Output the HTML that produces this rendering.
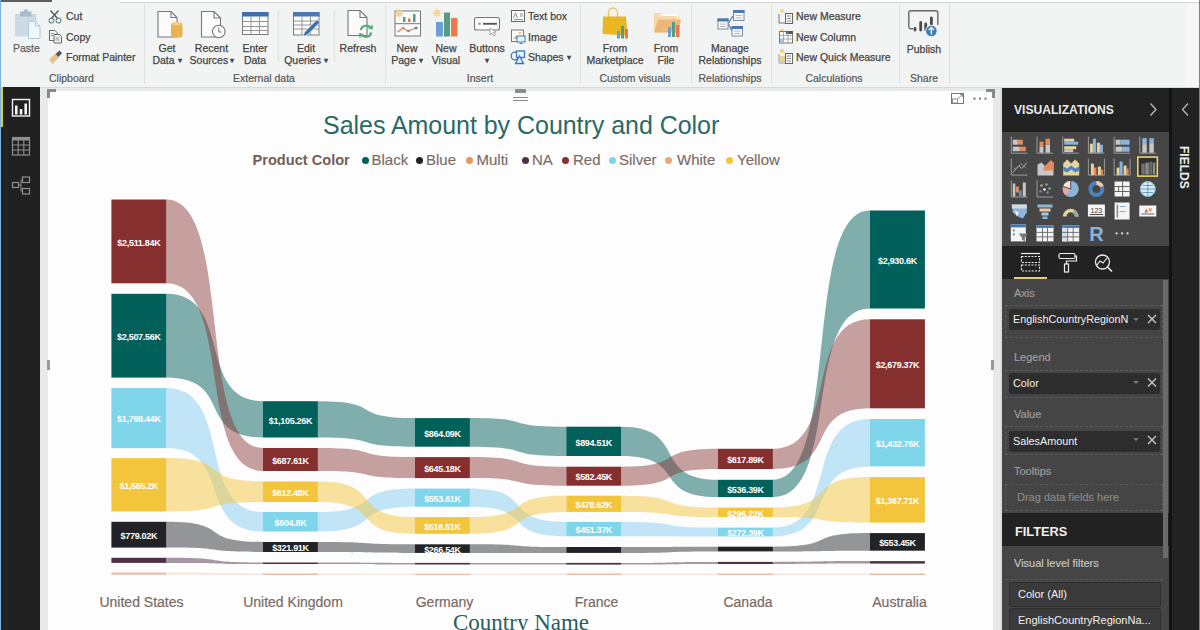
<!DOCTYPE html>
<html><head><meta charset="utf-8">
<style>
*{box-sizing:border-box}
html,body{margin:0;padding:0;width:1200px;height:630px;overflow:hidden;background:#f2f4f3;font-family:"Liberation Sans",sans-serif}
.a{position:absolute}
.rb{color:#444;font-size:10.5px;line-height:12px;white-space:nowrap;-webkit-text-stroke:0.25px #444}
.gl{color:#555;font-size:10.5px;line-height:12px;white-space:nowrap;-webkit-text-stroke:0.2px #555}
.dl{font-family:"Liberation Sans",sans-serif;font-weight:bold;font-size:9px;fill:#fff;letter-spacing:-0.3px}
.xl{color:#7b6b66;font-size:14px;line-height:16px;white-space:nowrap;-webkit-text-stroke:0.2px #7b6b66}
.lg{color:#7b6b66;font-size:15px;line-height:18px;white-space:nowrap;-webkit-text-stroke:0.15px #7b6b66}
.c{text-align:center}
.car{font-size:8px;position:relative;top:-1px}
.pl{color:#a0a0a0;font-size:11px;line-height:14px;white-space:nowrap;-webkit-text-stroke:0.15px}
.well{width:158px;border:1px dashed #5a5a5a}
.box{width:151px;height:20.5px;background:#2d2d2d;color:#f0f0f0;font-size:10.8px;line-height:20px;padding-left:4px;white-space:nowrap;border-radius:2px}
.fbox{width:152px;background:#3a3a3a;color:#f0f0f0;font-size:11px;line-height:22px;padding-left:8px;white-space:nowrap;border:1px solid #2f2f2f;border-radius:2px}
.dot{width:7px;height:7px;border-radius:50%}
</style></head><body>
<!-- ribbon -->
<div class="a" style="left:0;top:0;width:1200px;height:88px;background:#f2f4f3;border-bottom:1px solid #d9d9d9"></div>
<div class="a" style="left:0;top:0;width:52px;height:2px;background:#5e5e5e"></div>
<div class="a" style="left:120px;top:0;width:1080px;height:3px;background:#fff;border-bottom:1px solid #d6d6d6"></div>
<div class="a" style="left:0;top:0;width:1px;height:630px;background:#78b6de"></div>
<div class="a" style="left:1186px;top:4px;width:13px;height:83px;background:#f6f6f6"></div>
<div class="a" style="left:1199px;top:0;width:1px;height:630px;background:#4a90c8"></div>
<!-- ribbon texts -->
<div class="a rb" style="left:13px;top:42px;color:#7a7a7a">Paste</div>
<div class="a rb" style="left:66px;top:10px">Cut</div>
<div class="a rb" style="left:66px;top:31px">Copy</div>
<div class="a rb" style="left:66px;top:51px">Format Painter</div>
<div class="a gl" style="left:49px;top:72px">Clipboard</div>
<div class="a" style="left:144px;top:4px;width:1px;height:80px;background:#e0e0e0"></div>

<div class="a rb c" style="left:147px;width:40px;top:42px">Get</div>
<div class="a rb c" style="left:147px;width:40px;top:54px">Data <span class="car">&#9662;</span></div>
<div class="a rb c" style="left:186.5px;width:50px;top:42px">Recent</div>
<div class="a rb c" style="left:187px;width:50px;top:54px">Sources<span class="car"> &#9662;</span></div>
<div class="a rb c" style="left:235px;width:40px;top:42px">Enter</div>
<div class="a rb c" style="left:235px;width:40px;top:54px">Data</div>
<div class="a" style="left:278px;top:10px;width:1px;height:52px;background:#e0e0e0"></div>
<div class="a rb c" style="left:282px;width:48px;top:42px">Edit</div>
<div class="a rb c" style="left:282px;width:48px;top:54px">Queries <span class="car">&#9662;</span></div>
<div class="a" style="left:334px;top:10px;width:1px;height:52px;background:#e0e0e0"></div>
<div class="a rb c" style="left:337px;width:42px;top:42px">Refresh</div>
<div class="a gl c" style="left:214px;width:100px;top:72px">External data</div>
<div class="a" style="left:385px;top:4px;width:1px;height:80px;background:#e0e0e0"></div>

<div class="a rb c" style="left:390px;width:34px;top:42px">New</div>
<div class="a rb c" style="left:388px;width:38px;top:54px">Page <span class="car">&#9662;</span></div>
<div class="a rb c" style="left:428px;width:36px;top:42px">New</div>
<div class="a rb c" style="left:428px;width:36px;top:54px">Visual</div>
<div class="a rb c" style="left:465px;width:44px;top:42px">Buttons</div>
<div class="a rb c" style="left:465px;width:44px;top:54px"><span class="car">&#9662;</span></div>
<div class="a rb" style="left:528px;top:10px">Text box</div>
<div class="a rb" style="left:528px;top:31px">Image</div>
<div class="a rb" style="left:528px;top:51px">Shapes <span class="car">&#9662;</span></div>
<div class="a gl c" style="left:440px;width:80px;top:72px">Insert</div>
<div class="a" style="left:580px;top:4px;width:1px;height:80px;background:#e0e0e0"></div>

<div class="a rb c" style="left:585px;width:60px;top:42px">From</div>
<div class="a rb c" style="left:585px;width:60px;top:54px">Marketplace</div>
<div class="a rb c" style="left:646px;width:40px;top:42px">From</div>
<div class="a rb c" style="left:646px;width:40px;top:54px">File</div>
<div class="a gl c" style="left:585px;width:100px;top:72px">Custom visuals</div>
<div class="a" style="left:691px;top:4px;width:1px;height:80px;background:#e0e0e0"></div>

<div class="a rb c" style="left:693px;width:74px;top:42px">Manage</div>
<div class="a rb c" style="left:693px;width:74px;top:54px">Relationships</div>
<div class="a gl c" style="left:693px;width:74px;top:72px">Relationships</div>
<div class="a" style="left:771px;top:4px;width:1px;height:80px;background:#e0e0e0"></div>

<div class="a rb" style="left:796px;top:10px">New Measure</div>
<div class="a rb" style="left:796px;top:31px">New Column</div>
<div class="a rb" style="left:796px;top:51px">New Quick Measure</div>
<div class="a gl c" style="left:784px;width:100px;top:72px">Calculations</div>
<div class="a" style="left:899px;top:4px;width:1px;height:80px;background:#e0e0e0"></div>

<div class="a rb c" style="left:900px;width:48px;top:43px">Publish</div>
<div class="a gl c" style="left:900px;width:48px;top:72px">Share</div>
<div class="a" style="left:949px;top:4px;width:1px;height:80px;background:#e0e0e0"></div>

<svg class="a" style="left:0;top:0" width="1000" height="88" viewBox="0 0 1000 88">
<!-- Paste -->
<rect x="15" y="14" width="21.5" height="22.5" fill="#cbdbe6"/>
<rect x="20" y="11.5" width="11.5" height="5" fill="#a9bccb"/>
<circle cx="25.8" cy="11.5" r="2.3" fill="#a9bccb"/>
<path d="M28.5,21.5 H35.5 L40,26 V38.5 H28.5 Z" fill="#eef7fb" stroke="#b5c8d5" stroke-width="1"/>
<path d="M35.5,21.5 V26 H40" fill="none" stroke="#b5c8d5" stroke-width="1"/>
<!-- Cut -->
<path d="M50.5,10.5 L58,19 M58.5,10.5 L51,19" stroke="#555" stroke-width="1.3" fill="none"/>
<circle cx="51.5" cy="20.5" r="2.4" fill="none" stroke="#6a8a8a" stroke-width="1.1"/>
<circle cx="58.5" cy="20.5" r="2.4" fill="none" stroke="#6a8a8a" stroke-width="1.1"/>
<!-- Copy -->
<path d="M49.5,30.5 H55 L57,32.5 V40.5 H49.5 Z" fill="#f6f6f6" stroke="#666" stroke-width="1"/>
<path d="M54,34.5 H59.5 L61.5,36.5 V43 H54 Z" fill="#f6f6f6" stroke="#666" stroke-width="1"/>
<path d="M51,33.5 H54 M51,35.5 H53 M55.5,38 H59.5 M55.5,40 H59.5" stroke="#777" stroke-width="0.8"/>
<!-- Format painter -->
<path d="M49,60 L55,53.5 L59,57.5 L52.5,64 Z" fill="#e2c48a"/>
<path d="M55.5,54 L59.5,50.5 L62,53 L58.5,57" fill="#555"/>
<!-- Get Data -->
<path d="M158,11.5 H171 L177,17.5 V37 H158 Z" fill="#fbfbfb" stroke="#777" stroke-width="1.1"/>
<path d="M171,11.5 V17.5 H177" fill="none" stroke="#777" stroke-width="1.1"/>
<rect x="171" y="23" width="11.5" height="14.5" rx="2" fill="#e9b253"/>
<ellipse cx="176.75" cy="23.5" rx="5.75" ry="1.8" fill="#f3cf8a"/>
<!-- Recent Sources -->
<path d="M201.5,11.5 H214 L220.5,18 V37 H201.5 Z" fill="#fbfbfb" stroke="#777" stroke-width="1.1"/>
<path d="M214,11.5 V18 H220.5" fill="none" stroke="#777" stroke-width="1.1"/>
<circle cx="218.8" cy="31.5" r="6.3" fill="#fbfbfb" stroke="#777" stroke-width="1.1"/>
<path d="M218.8,27.5 V32 H221.5" fill="none" stroke="#777" stroke-width="1"/>
<!-- Enter Data -->
<rect x="242.5" y="12.5" width="25.5" height="22" fill="#fbfbfb" stroke="#7a7a7a" stroke-width="1"/>
<rect x="242" y="12" width="26.5" height="4.5" fill="#3f70ad"/>
<path d="M251,16.5 V34.5 M259.5,16.5 V34.5 M242.5,21.5 H268 M242.5,26.5 H268 M242.5,30.5 H268" stroke="#8a8a8a" stroke-width="0.9"/>
<!-- Edit Queries -->
<rect x="293.5" y="12.5" width="25.5" height="22.5" fill="#fbfbfb" stroke="#7a7a7a" stroke-width="1"/>
<rect x="293" y="12" width="26.5" height="4.5" fill="#4a7ab2"/>
<path d="M302,16.5 V35 M310.5,16.5 V35 M293.5,21 H319 M293.5,25 H319 M293.5,29 H319" stroke="#8a8a8a" stroke-width="0.9"/>
<path d="M303,36.5 L304.5,32 L317,19.5 L320,22.5 L307.5,35 Z" fill="#3d6fa8" stroke="#fbfbfb" stroke-width="0.8"/>
<!-- Refresh -->
<path d="M348,10.5 H360 L367,17.5 V35.5 H348 Z" fill="#fbfbfb" stroke="#777" stroke-width="1.1"/>
<path d="M360,10.5 V17.5 H367" fill="none" stroke="#777" stroke-width="1.1"/>
<path d="M360.8,30 A5.4,5.4 0 0 1 370.6,28" fill="none" stroke="#5aa87c" stroke-width="2.2"/>
<path d="M371.2,32.5 A5.4,5.4 0 0 1 361.4,34.5" fill="none" stroke="#5aa87c" stroke-width="2.2"/>
<path d="M368,28.5 L373,29.5 L372.5,24.5 Z M364,34 L359,33 L359.5,38 Z" fill="#5aa87c"/>
<!-- New Page -->
<rect x="395" y="11" width="25.5" height="25" fill="#fbfbfb" stroke="#777" stroke-width="1"/>
<path d="M395,23.7 H420.5" stroke="#777" stroke-width="1"/>
<rect x="403" y="17" width="2.5" height="5" fill="#5a9a86"/><rect x="408" y="18.5" width="2.5" height="3.5" fill="#e8784a"/><rect x="413" y="14" width="2.5" height="8" fill="#5a9a86"/>
<path d="M397.5,32 L403,28 L408,31 L414,28.5 L418,28" fill="none" stroke="#e8784a" stroke-width="1.2"/>
<circle cx="403" cy="28" r="1.3" fill="#e8784a"/><circle cx="408.5" cy="31" r="1.3" fill="#5a9a86"/><circle cx="416" cy="28" r="1.6" fill="#5a9a86"/>
<circle cx="399" cy="13.5" r="3.3" fill="#f3dca0"/>
<path d="M399,8.5 V18.5 M394,13.5 H404 M395.5,10 L402.5,17 M402.5,10 L395.5,17" stroke="#f0d090" stroke-width="0.8"/>
<!-- New Visual -->
<circle cx="437" cy="13" r="3" fill="#f3dca0"/>
<path d="M437,8 V18 M432,13 H442 M433.5,9.5 L440.5,16.5 M440.5,9.5 L433.5,16.5" stroke="#f0d090" stroke-width="0.8"/>
<rect x="436" y="22" width="7" height="14.5" fill="#6c9fd2"/>
<rect x="444" y="12.5" width="6" height="24" fill="#5b9a82"/>
<rect x="451" y="18" width="6.5" height="18.5" fill="#ec7c46"/>
<!-- Buttons -->
<rect x="474.5" y="17.5" width="25" height="12.5" rx="2" fill="#fbfbfb" stroke="#777" stroke-width="1.1"/>
<circle cx="479.5" cy="23.8" r="1.2" fill="#7a9ab8"/>
<path d="M483,23.8 H497" stroke="#555" stroke-width="1.8"/>
<path d="M490,28 L490,35 L492,33 L494,36 L495.5,35 L493.5,32.5 L496,32 Z" fill="#fbfbfb" stroke="#888" stroke-width="0.7"/>
<!-- Text box -->
<rect x="511.5" y="10.5" width="13" height="11" fill="#fbfbfb" stroke="#666" stroke-width="1"/>
<path d="M513.5,18 L515.5,13 L517.5,18 M520,14 H523 M520,16 H523 M514,19.5 H523" stroke="#777" stroke-width="0.8" fill="none"/>
<!-- Image -->
<rect x="511.5" y="30" width="12" height="11.5" fill="#fbfbfb" stroke="#777" stroke-width="1"/>
<path d="M513,39 L516,35.5 L519,39 Z" fill="#a8c8a0"/><circle cx="520" cy="33" r="1.2" fill="#f0c050"/>
<rect x="517" y="36" width="8" height="6" fill="#eaf4fb" stroke="#3a78b8" stroke-width="1"/>
<path d="M519.5,43.5 H522.5" stroke="#3a78b8" stroke-width="1"/>
<!-- Shapes -->
<circle cx="515" cy="56" r="3.8" fill="none" stroke="#3a78b8" stroke-width="1.3"/>
<rect x="516.5" y="51" width="8" height="6.5" fill="#eaf4fb" stroke="#3a78b8" stroke-width="1.3"/>
<path d="M519.5,56 L515.5,63.5 H523.5 Z" fill="#eaf4fb" stroke="#3a78b8" stroke-width="1.3"/>
<!-- From Marketplace -->
<path d="M608.5,17 V12.5 A4.5,4.5 0 0 1 617.5,12.5 V17" fill="none" stroke="#e8c860" stroke-width="1.3"/>
<path d="M603,16.5 H626 L627.5,35.5 L602.5,34 Z" fill="#e8b722"/>
<rect x="617" y="31" width="3" height="7.5" fill="#6c9fd2"/><rect x="621" y="26" width="3" height="12.5" fill="#5b9a82"/><rect x="625" y="29" width="3" height="9.5" fill="#e8784a"/>
<!-- From File -->
<path d="M654,13 H662 L664,16 H679.5 V32.5 H654 Z" fill="#f7d9a8"/>
<path d="M654,32.5 L658,19.5 H681 L678,32.5 Z" fill="#eeb77a"/>
<path d="M660,16.5 V15 H677 V19" fill="none" stroke="#fff" stroke-width="1"/>
<rect x="668" y="27" width="3" height="10" fill="#6c9fd2"/><rect x="672" y="22" width="3" height="15" fill="#5b9a82"/><rect x="676" y="25" width="3.5" height="12" fill="#e8784a"/>
<!-- Manage Relationships -->
<path d="M728,23.5 L733,16 M728,23.5 L732,31" stroke="#4a78b0" stroke-width="1.2" fill="none"/>
<rect x="718" y="19" width="10" height="10" fill="#fbfbfb" stroke="#7a8aa0" stroke-width="1"/><rect x="717.5" y="18.5" width="11" height="3" fill="#4a78b0"/>
<path d="M720,24 H726 M720,26.5 H726" stroke="#999" stroke-width="0.7"/>
<rect x="733.5" y="10.5" width="10.5" height="10" fill="#fbfbfb" stroke="#7a8aa0" stroke-width="1"/><rect x="733" y="10" width="11.5" height="3" fill="#4a78b0"/>
<path d="M735.5,15.5 H742 M735.5,18 H742" stroke="#999" stroke-width="0.7"/>
<rect x="732" y="26.5" width="10.5" height="9.5" fill="#fbfbfb" stroke="#7a8aa0" stroke-width="1"/><rect x="731.5" y="26" width="11.5" height="3" fill="#4a78b0"/>
<path d="M734,31 H740.5 M734,33.5 H740.5" stroke="#999" stroke-width="0.7"/>
<!-- New Measure -->
<circle cx="782" cy="11" r="1.8" fill="#f0d080"/>
<path d="M779,14 V23 H785" fill="none" stroke="#777" stroke-width="1"/>
<rect x="785.5" y="13.5" width="7" height="10" fill="#f6f6f6" stroke="#666" stroke-width="1"/>
<path d="M787,16 H791 M787,18.5 H791 M787,21 H791" stroke="#777" stroke-width="0.8"/>
<!-- New Column -->
<circle cx="782" cy="30.5" r="1.8" fill="#f0d080"/>
<rect x="779.5" y="31.5" width="13" height="11.5" fill="#fbfbfb" stroke="#777" stroke-width="1"/>
<rect x="786" y="31" width="7" height="3" fill="#555"/>
<path d="M779.5,35.5 H792.5 M779.5,39 H792.5 M783.5,31.5 V43 M788,31.5 V43" stroke="#999" stroke-width="0.8"/>
<rect x="780" y="39" width="3.5" height="4" fill="#aac0d4"/>
<!-- New Quick Measure -->
<circle cx="782" cy="51" r="2" fill="#f0d080"/>
<path d="M779,54 V63 H785" fill="none" stroke="#999" stroke-width="1"/>
<rect x="780" y="56" width="5" height="6" fill="#e8d098"/>
<rect x="785.5" y="53.5" width="7" height="10" fill="#f6f6f6" stroke="#666" stroke-width="1"/>
<path d="M787,56 H791 M787,58.5 H791 M787,61 H791" stroke="#777" stroke-width="0.8"/>
<!-- Publish -->
<path d="M913,28.8 H910.5 A2,2 0 0 1 908.8,26.8 V12.8 A2,2 0 0 1 910.8,10.8 H935.8 A2,2 0 0 1 937.8,12.8 V25" fill="none" stroke="#666" stroke-width="1.4"/>
<path d="M915,28.5 V30 M920.7,22.5 V30 M925.7,24 V30 M931.4,18 V30" fill="none" stroke="#4a4a4a" stroke-width="2.8" stroke-linecap="round"/>
<circle cx="931.4" cy="31" r="5.8" fill="#3f7bb5" stroke="#f2f4f3" stroke-width="1"/>
<path d="M931.4,34.5 V27.8 M928.8,30 L931.4,27.4 L934,30" fill="none" stroke="#fff" stroke-width="1.3"/>
</svg>

<!-- nav -->
<div class="a" style="left:1px;top:87px;width:39px;height:543px;background:#212121"></div>
<div class="a" style="left:1px;top:87px;width:2px;height:40px;background:#e8c840"></div>
<!-- canvas area -->
<div class="a" style="left:40px;top:88px;width:962px;height:542px;background:#e9e9e9"></div>
<div class="a" style="left:48px;top:91px;width:945px;height:539px;background:#fdfdfd"></div>
<!-- right panel -->
<!-- right panel -->
<div class="a" style="left:1000px;top:88px;width:2px;height:542px;background:#dedede"></div>
<div class="a" style="left:1002px;top:88px;width:167px;height:542px;background:#222"></div>
<div class="a" style="left:1169px;top:88px;width:3px;height:542px;background:#131313"></div>
<div class="a" style="left:1172px;top:88px;width:27px;height:542px;background:#222"></div>
<div class="a" style="left:1014px;top:103.3px;font-size:12.1px;line-height:15px;font-weight:bold;color:#eaeaea;white-space:nowrap">VISUALIZATIONS</div>
<svg class="a" style="left:1140px;top:95px" width="60" height="100" viewBox="1140 95 60 100">
<path d="M1150.5,103.5 L1156,109.5 L1150.5,115.5" fill="none" stroke="#bbb" stroke-width="1.3"/>
<path d="M1188,103.5 L1182.5,109.5 L1188,115.5" fill="none" stroke="#bbb" stroke-width="1.3"/>
</svg>
<div class="a" style="left:1163px;top:160px;width:42px;height:14px;transform:rotate(90deg);transform-origin:center;font-size:12px;line-height:14px;font-weight:bold;color:#eee;white-space:nowrap;text-align:center">FIELDS</div>
<!-- gallery -->
<div class="a" style="left:1002px;top:131.5px;width:167px;height:114px;background:#464646"></div>
<svg class="a" style="left:1002px;top:131px" width="167" height="115" viewBox="1002 131 167 115"><path d="M1011.3,136.7 V153.2 H1027.3" fill="none" stroke="#9a9a9a" stroke-width="1"/><rect x="1012.8" y="139.7" width="5.0" height="5.0" fill="#c8c8c8"/><rect x="1017.8" y="139.7" width="5.0" height="5.0" fill="#e8895a"/><rect x="1012.8" y="146.7" width="7.0" height="4.5" fill="#c8c8c8"/><rect x="1019.8" y="146.7" width="6.0" height="4.5" fill="#e8895a"/><path d="M1037.0,136.7 V153.2 H1053.0" fill="none" stroke="#9a9a9a" stroke-width="1"/><rect x="1039.5" y="141.7" width="4.0" height="5.0" fill="#e8895a"/><rect x="1039.5" y="146.7" width="4.0" height="6.0" fill="#c8c8c8"/><rect x="1045.5" y="138.7" width="4.5" height="6.0" fill="#e8895a"/><rect x="1045.5" y="144.7" width="4.5" height="8.0" fill="#c8c8c8"/><path d="M1062.7,136.7 V153.2 H1078.7" fill="none" stroke="#9a9a9a" stroke-width="1"/><rect x="1064.2" y="138.7" width="10.0" height="3.0" fill="#e6d49a"/><rect x="1064.2" y="141.7" width="14.0" height="3.0" fill="#8ab4dc"/><rect x="1064.2" y="146.2" width="12.0" height="3.0" fill="#e6d49a"/><rect x="1064.2" y="149.2" width="9.0" height="3.0" fill="#c8c8c8"/><path d="M1088.4,136.7 V153.2 H1104.4" fill="none" stroke="#9a9a9a" stroke-width="1"/><rect x="1089.9" y="143.7" width="3.0" height="9.0" fill="#e6d49a"/><rect x="1092.9" y="138.7" width="3.0" height="14.0" fill="#8ab4dc"/><rect x="1096.9" y="142.7" width="3.0" height="10.0" fill="#e6d49a"/><rect x="1099.9" y="144.7" width="3.0" height="8.0" fill="#8ab4dc"/><path d="M1114.1,136.7 V153.2 H1130.1" fill="none" stroke="#9a9a9a" stroke-width="1"/><rect x="1115.6" y="139.7" width="5.0" height="5.0" fill="#c8c8c8"/><rect x="1120.6" y="139.7" width="9.0" height="5.0" fill="#8ab4dc"/><rect x="1115.6" y="146.7" width="7.0" height="5.0" fill="#c8c8c8"/><rect x="1122.6" y="146.7" width="7.0" height="5.0" fill="#8ab4dc"/><path d="M1139.8,136.7 V153.2 H1155.8" fill="none" stroke="#9a9a9a" stroke-width="1"/><rect x="1142.3" y="138.2" width="4.5" height="6.0" fill="#8ab4dc"/><rect x="1142.3" y="144.2" width="4.5" height="8.5" fill="#c8c8c8"/><rect x="1149.3" y="138.2" width="4.5" height="5.0" fill="#8ab4dc"/><rect x="1149.3" y="143.2" width="4.5" height="9.5" fill="#c8c8c8"/><path d="M1011.3,158.6 V175.1 H1027.3" fill="none" stroke="#9a9a9a" stroke-width="1"/><path d="M1012.8,172.6 L1018.8,165.6 L1021.8,168.6 L1026.8,162.6" fill="none" stroke="#b0b0b0" stroke-width="1"/><path d="M1013.8,168.6 L1017.8,167.6 L1020.8,163.6 L1025.8,167.6" fill="none" stroke="#888" stroke-width="0.9"/><path d="M1037.5,175.6 V164.6 L1041.5,162.6 L1045.5,166.6 L1050.5,160.6 L1053.5,162.6 V175.6 Z" fill="#c8c8c8"/><path d="M1043.5,167.6 L1050.5,160.6 L1053.5,162.6 V170.6 L1043.5,170.6 Z" fill="#e8895a"/><path d="M1063.2,175.6 V163.6 L1067.2,159.6 L1071.2,163.6 L1075.2,159.6 L1079.2,163.6 V175.6 Z" fill="#e6d49a"/><path d="M1063.2,170.6 V166.6 L1067.2,168.6 L1071.2,165.6 L1075.2,168.6 L1079.2,166.6 V170.6 L1075.2,172.6 L1071.2,169.6 L1067.2,172.6 Z" fill="#4a84c0"/><path d="M1088.4,158.6 V175.1 H1104.4 V158.6" fill="none" stroke="#9a9a9a" stroke-width="1"/><rect x="1090.9" y="163.6" width="3.0" height="11.5" fill="#e6d49a"/><rect x="1093.9" y="167.6" width="2.5" height="7.5" fill="#e8895a"/><rect x="1097.9" y="166.6" width="3.0" height="8.5" fill="#e6d49a"/><rect x="1100.9" y="169.6" width="2.0" height="5.5" fill="#e8895a"/><path d="M1114.1,158.6 V175.1 H1130.1 V158.6" fill="none" stroke="#9a9a9a" stroke-width="1"/><rect x="1116.6" y="167.6" width="3.0" height="7.5" fill="#e6d49a"/><rect x="1119.6" y="161.6" width="3.0" height="13.5" fill="#8ab4dc"/><rect x="1123.6" y="165.6" width="3.0" height="9.5" fill="#e6d49a"/><rect x="1126.6" y="168.6" width="2.0" height="6.5" fill="#e8895a"/><rect x="1137.8" y="157.1" width="19.5" height="19" fill="#2f2f2f" stroke="#e8d36c" stroke-width="1.6"/><rect x="1141.3" y="163.6" width="3.5" height="11.0" fill="#707070"/><rect x="1145.3" y="162.6" width="3.5" height="12.0" fill="#8a8a8a"/><rect x="1149.3" y="161.6" width="3.0" height="13.0" fill="#6a6a6a"/><rect x="1152.8" y="162.6" width="2.5" height="12.0" fill="#8a8a8a"/><path d="M1011.3,180.5 V197.0 H1027.3" fill="none" stroke="#9a9a9a" stroke-width="1"/><rect x="1012.8" y="183.5" width="2.5" height="13.0" fill="#c8c8c8"/><rect x="1015.8" y="186.5" width="3.0" height="6.0" fill="#e8895a"/><rect x="1018.8" y="190.5" width="3.0" height="6.0" fill="#6a8ab0"/><rect x="1022.8" y="182.5" width="3.0" height="14.0" fill="#c8c8c8"/><path d="M1037.0,180.5 V197.0 H1053.0" fill="none" stroke="#9a9a9a" stroke-width="1"/><circle cx="1041.5" cy="185.5" r="1.3" fill="#c89a8a"/><circle cx="1046.5" cy="184.5" r="1.3" fill="#7aa89a"/><circle cx="1044.5" cy="189.5" r="1.3" fill="#f4f4f4"/><circle cx="1049.5" cy="188.5" r="1.3" fill="#7aa89a"/><circle cx="1040.5" cy="191.5" r="1.3" fill="#6a8ab0"/><circle cx="1047.5" cy="192.5" r="1.3" fill="#888"/><circle cx="1070.7" cy="189.0" r="8" fill="#8ab4dc"/><path d="M1070.7,189.0 L1070.7,181.0 A8,8 0 0 0 1063.2,186.5 Z" fill="#f0e4d8"/><path d="M1070.7,189.0 L1063.2,186.5 A8,8 0 0 0 1066.2,195.5 Z" fill="#e8a8a0"/><path d="M1070.7,181.0 V189.0 L1063.2,186.5" fill="none" stroke="#333" stroke-width="0.8"/><circle cx="1096.4" cy="189.0" r="6" fill="none" stroke="#4a84c0" stroke-width="4"/><path d="M1096.4,183.0 A6,6 0 0 1 1101.9,186.5" fill="none" stroke="#f0c8a0" stroke-width="4"/><rect x="1114.6" y="181.5" width="15.0" height="15.0" fill="#f4f4f4"/><path d="M1114.6,186.5 H1129.6 M1114.6,191.5 H1129.6 M1122.6,181.5 V196.5 M1118.6,186.5 V191.5" fill="none" stroke="#555" stroke-width="0.9"/><circle cx="1147.8" cy="189.0" r="7.5" fill="#d8eef8" stroke="#8ac8e0" stroke-width="1"/><path d="M1140.3,189.0 H1155.3 M1147.8,181.5 V196.5 M1142.3,185.5 H1153.3 M1142.3,192.5 H1153.3" fill="none" stroke="#5a8aa8" stroke-width="0.8"/><path d="M1011.8,204.5 H1026.8 V212.5 L1022.8,218.5 L1017.8,216.5 L1012.8,212.5 Z" fill="#8ab4dc"/><path d="M1011.8,204.5 H1026.8 V208.5 H1011.8 Z" fill="#d8d8d8"/><path d="M1014.8,210.5 L1018.8,212.5 L1016.8,216.5 Z" fill="#f4f4f4"/><rect x="1037.5" y="204.5" width="15.0" height="3.0" fill="#8ab8d8"/><rect x="1039.5" y="208.5" width="11.0" height="3.0" fill="#f0c8a8"/><rect x="1041.5" y="212.5" width="7.0" height="3.0" fill="#a8c8e8"/><rect x="1042.5" y="216.5" width="5.0" height="2.5" fill="#8ab8d8"/><path d="M1064.7,216.5 A6,6 0 0 1 1076.7,216.5" fill="none" stroke="#e6d49a" stroke-width="3.5"/><path d="M1073.2,211.3 A6,6 0 0 1 1076.7,216.5" fill="none" stroke="#8ab09a" stroke-width="3.5"/><rect x="1087.9" y="204.5" width="17.0" height="12.0" fill="#f4f4f4"/><text x="1096.4" y="212.5" font-size="7" font-family="Liberation Sans" fill="#444" text-anchor="middle">123</text><rect x="1089.9" y="214.0" width="13.0" height="1.0" fill="#444"/><rect x="1114.6" y="202.5" width="15.0" height="17.0" fill="#f4f4f4"/><rect x="1116.6" y="204.5" width="1.5" height="13.0" fill="#888"/><path d="M1119.6,206.5 H1125.6 M1119.6,211.5 H1125.6" fill="none" stroke="#8aa8c8" stroke-width="1.2"/><rect x="1139.3" y="205.5" width="17.0" height="11.0" fill="#f4f4f4"/><path d="M1144.3,212.5 L1146.3,208.5 L1148.3,212.5 Z" fill="#8a8a8a"/><path d="M1148.3,208.5 L1152.3,208.5 L1150.3,212.5 Z" fill="#e8895a"/><rect x="1141.3" y="213.5" width="13.0" height="1.0" fill="#666"/><rect x="1010.8" y="224.4" width="15.0" height="17.0" fill="#f4f4f4"/><rect x="1010.8" y="224.4" width="15.0" height="3.0" fill="#3f78b0"/><rect x="1012.8" y="229.4" width="2.0" height="2.0" fill="#888"/><rect x="1012.8" y="233.4" width="2.0" height="2.0" fill="#888"/><path d="M1018.8,233.4 H1027.8 L1024.8,237.4 V241.4 L1021.8,239.4 V237.4 Z" fill="#777"/><rect x="1036.5" y="225.4" width="17.0" height="16.0" fill="#f4f4f4"/><rect x="1036.5" y="225.4" width="17.0" height="2.5" fill="#3f78b0"/><path d="M1042.5,227.4 V241.4 M1047.5,227.4 V241.4 M1036.5,232.4 H1053.5 M1036.5,236.9 H1053.5" fill="none" stroke="#666" stroke-width="0.9"/><rect x="1062.2" y="225.4" width="17.0" height="16.0" fill="#f4f4f4"/><rect x="1062.2" y="225.4" width="17.0" height="2.5" fill="#3f78b0"/><rect x="1062.2" y="227.9" width="5.0" height="13.5" fill="#d0e0f0"/><path d="M1067.7,227.4 V241.4 M1073.2,227.4 V241.4 M1062.2,232.4 H1079.2 M1062.2,236.9 H1079.2" fill="none" stroke="#666" stroke-width="0.9"/><text x="1096.4" y="240.9" font-size="20" font-weight="bold" font-family="Liberation Sans" fill="#8ab4dc" text-anchor="middle">R</text><circle cx="1116.6" cy="233.4" r="1.1" fill="#e0e0e0"/><circle cx="1122.1" cy="233.4" r="1.1" fill="#e0e0e0"/><circle cx="1127.6" cy="233.4" r="1.1" fill="#e0e0e0"/></svg>
<!-- tabs -->
<svg class="a" style="left:1002px;top:245px" width="167" height="35" viewBox="1002 245 167 35">
<path d="M1021,253.5 H1040" stroke="#eee" stroke-width="1.2"/>
<rect x="1021.5" y="256.5" width="18" height="6" fill="none" stroke="#eee" stroke-width="1.1" stroke-dasharray="2,1.3"/>
<rect x="1021.5" y="265" width="18" height="6" fill="none" stroke="#eee" stroke-width="1.1" stroke-dasharray="2,1.3"/>
<rect x="1059" y="253.5" width="16" height="5" rx="1.5" fill="none" stroke="#eee" stroke-width="1.2"/>
<path d="M1075,256 H1076.5 V261 H1066.5 V264" fill="none" stroke="#eee" stroke-width="1.2"/>
<rect x="1064.5" y="264" width="4" height="8" fill="none" stroke="#eee" stroke-width="1.2"/>
<circle cx="1102.5" cy="262" r="7" fill="none" stroke="#eee" stroke-width="1.3"/>
<path d="M1107.5,267 L1112,271.5" stroke="#eee" stroke-width="1.6"/>
<path d="M1097,265 L1100,261 L1103,263 L1107,258" fill="none" stroke="#eee" stroke-width="1.1"/>
<rect x="1014" y="277" width="33" height="2.3" fill="#e6cf6e"/>
</svg>
<!-- fields wells -->
<div class="a" style="left:1002px;top:279px;width:167px;height:234px;background:#454545"></div>
<div class="a" style="left:1163px;top:280px;width:5px;height:278px;background:#6a6a6a"></div>
<div class="a pl" style="left:1014px;top:286px">Axis</div>
<div class="a well" style="left:1005px;top:305px;height:33px"></div>
<div class="a box" style="left:1009px;top:309px">EnglishCountryRegionN</div>
<div class="a pl" style="left:1014px;top:350px">Legend</div>
<div class="a well" style="left:1005px;top:369.5px;height:28.5px"></div>
<div class="a box" style="left:1009px;top:373px">Color</div>
<div class="a pl" style="left:1014px;top:407px">Value</div>
<div class="a well" style="left:1005px;top:425.5px;height:29.5px"></div>
<div class="a box" style="left:1009px;top:431px">SalesAmount</div>
<div class="a pl" style="left:1014px;top:464px">Tooltips</div>
<div class="a well" style="left:1005px;top:484px;height:27px"></div>
<div class="a pl" style="left:1017px;top:490px;color:#8a8a8a">Drag data fields here</div>
<svg class="a" style="left:1125px;top:305px" width="40" height="150" viewBox="1125 305 40 150">
<path d="M1133,318 L1139,318 L1136,321 Z M1133,381 L1139,381 L1136,384 Z M1133,438 L1139,438 L1136,441 Z" fill="#777"/>
<path d="M1148,315 L1156,323 M1156,315 L1148,323 M1148,378.5 L1156,386.5 M1156,378.5 L1148,386.5 M1148,436 L1156,444 M1156,436 L1148,444" stroke="#d0d0d0" stroke-width="1.2"/>
</svg>
<!-- filters -->
<div class="a" style="left:1002px;top:513px;width:161px;height:33px;background:#222"></div>
<div class="a" style="left:1015px;top:524px;font-size:12.8px;line-height:16px;font-weight:bold;color:#f0f0f0;white-space:nowrap">FILTERS</div>
<div class="a" style="left:1002px;top:546px;width:167px;height:84px;background:#454545"></div>
<div class="a" style="left:1163px;top:546px;width:5px;height:12px;background:#6a6a6a"></div>
<div class="a pl" style="left:1014px;top:556px;color:#c8c8c8">Visual level filters</div>
<div class="a" style="left:1005px;top:579px;width:158px;height:0;border-top:1px dashed #5a5a5a"></div>
<div class="a fbox" style="left:1009px;top:581.5px;height:25px">Color (All)</div>
<div class="a fbox" style="left:1009px;top:608px;height:25px">EnglishCountryRegionNa...</div>

<svg width="1200" height="630" viewBox="0 0 1200 630" style="position:absolute;left:0;top:0">
<path d="M166.3,293.8 C233.99,293.8 195.31,401.2 263,401.2 L263,437.5 C195.31,437.5 233.99,377.6 166.3,377.6 Z" fill="#02605b" fill-opacity="0.5"/>
<path d="M166.3,521.8 C233.99,521.8 195.31,542 263,542 L263,552 C195.31,552 233.99,547.6 166.3,547.6 Z" fill="#222326" fill-opacity="0.48"/>
<path d="M166.3,572.6 C233.99,572.6 195.31,573.5 263,573.5 L263,575 C195.31,575 233.99,574.7 166.3,574.7 Z" fill="#ecb9a4" fill-opacity="0.35"/>
<path d="M166.3,557.8 C233.99,557.8 195.31,562.5 263,562.5 L263,564 C195.31,564 233.99,562.9 166.3,562.9 Z" fill="#4d3245" fill-opacity="0.5"/>
<path d="M166.3,199.5 C233.99,199.5 195.31,448 263,448 L263,471 C195.31,471 233.99,283.3 166.3,283.3 Z" fill="#862f2f" fill-opacity="0.46"/>
<path d="M166.3,388.1 C233.99,388.1 195.31,512 263,512 L263,531.5 C195.31,531.5 233.99,448.1 166.3,448.1 Z" fill="#7fcbee" fill-opacity="0.48"/>
<path d="M166.3,458.1 C233.99,458.1 195.31,481.5 263,481.5 L263,502 C195.31,502 233.99,511.4 166.3,511.4 Z" fill="#f3c53d" fill-opacity="0.5"/>
<path d="M317.9,401.2 C385.87,401.2 347.03,418.1 415,418.1 L415,446.7 C347.03,446.7 385.87,437.5 317.9,437.5 Z" fill="#02605b" fill-opacity="0.5"/>
<path d="M317.9,542 C385.87,542 347.03,544.3 415,544.3 L415,552.9 C347.03,552.9 385.87,552 317.9,552 Z" fill="#222326" fill-opacity="0.48"/>
<path d="M317.9,573.5 C385.87,573.5 347.03,573.8 415,573.8 L415,575 C347.03,575 385.87,575 317.9,575 Z" fill="#ecb9a4" fill-opacity="0.35"/>
<path d="M317.9,562.5 C385.87,562.5 347.03,562.9 415,562.9 L415,564.5 C347.03,564.5 385.87,564 317.9,564 Z" fill="#4d3245" fill-opacity="0.5"/>
<path d="M317.9,448 C385.87,448 347.03,457.1 415,457.1 L415,478.1 C347.03,478.1 385.87,471 317.9,471 Z" fill="#862f2f" fill-opacity="0.46"/>
<path d="M317.9,512 C385.87,512 347.03,488.6 415,488.6 L415,506.7 C347.03,506.7 385.87,531.5 317.9,531.5 Z" fill="#7fcbee" fill-opacity="0.48"/>
<path d="M317.9,481.5 C385.87,481.5 347.03,517.1 415,517.1 L415,533.8 C347.03,533.8 385.87,502 317.9,502 Z" fill="#f3c53d" fill-opacity="0.5"/>
<path d="M469.9,418.1 C537.38,418.1 498.82,426.7 566.3,426.7 L566.3,456 C498.82,456 537.38,446.7 469.9,446.7 Z" fill="#02605b" fill-opacity="0.5"/>
<path d="M469.9,544.3 C537.38,544.3 498.82,547 566.3,547 L566.3,552.9 C498.82,552.9 537.38,552.9 469.9,552.9 Z" fill="#222326" fill-opacity="0.48"/>
<path d="M469.9,573.8 C537.38,573.8 498.82,573.5 566.3,573.5 L566.3,575 C498.82,575 537.38,575 469.9,575 Z" fill="#ecb9a4" fill-opacity="0.35"/>
<path d="M469.9,562.9 C537.38,562.9 498.82,562.9 566.3,562.9 L566.3,564.6 C498.82,564.6 537.38,564.5 469.9,564.5 Z" fill="#4d3245" fill-opacity="0.5"/>
<path d="M469.9,457.1 C537.38,457.1 498.82,466.7 566.3,466.7 L566.3,485.7 C498.82,485.7 537.38,478.1 469.9,478.1 Z" fill="#862f2f" fill-opacity="0.46"/>
<path d="M469.9,488.6 C537.38,488.6 498.82,521.9 566.3,521.9 L566.3,536.2 C498.82,536.2 537.38,506.7 469.9,506.7 Z" fill="#7fcbee" fill-opacity="0.48"/>
<path d="M469.9,517.1 C537.38,517.1 498.82,495.7 566.3,495.7 L566.3,511.9 C498.82,511.9 537.38,533.8 469.9,533.8 Z" fill="#f3c53d" fill-opacity="0.5"/>
<path d="M621.1999999999999,426.7 C688.96,426.7 650.24,479.8 718,479.8 L718,497.1 C650.24,497.1 688.96,456 621.1999999999999,456 Z" fill="#02605b" fill-opacity="0.5"/>
<path d="M621.1999999999999,547 C688.96,547 650.24,546.7 718,546.7 L718,551.4 C650.24,551.4 688.96,552.9 621.1999999999999,552.9 Z" fill="#222326" fill-opacity="0.48"/>
<path d="M621.1999999999999,573.5 C688.96,573.5 650.24,573.5 718,573.5 L718,575 C650.24,575 688.96,575 621.1999999999999,575 Z" fill="#ecb9a4" fill-opacity="0.35"/>
<path d="M621.1999999999999,562.9 C688.96,562.9 650.24,561.9 718,561.9 L718,564 C650.24,564 688.96,564.6 621.1999999999999,564.6 Z" fill="#4d3245" fill-opacity="0.5"/>
<path d="M621.1999999999999,466.7 C688.96,466.7 650.24,448.8 718,448.8 L718,469 C650.24,469 688.96,485.7 621.1999999999999,485.7 Z" fill="#862f2f" fill-opacity="0.46"/>
<path d="M621.1999999999999,521.9 C688.96,521.9 650.24,527.6 718,527.6 L718,536.4 C650.24,536.4 688.96,536.2 621.1999999999999,536.2 Z" fill="#7fcbee" fill-opacity="0.48"/>
<path d="M621.1999999999999,495.7 C688.96,495.7 650.24,507.6 718,507.6 L718,517.1 C650.24,517.1 688.96,511.9 621.1999999999999,511.9 Z" fill="#f3c53d" fill-opacity="0.5"/>
<path d="M772.9,479.8 C840.87,479.8 802.03,210.5 870,210.5 L870,308.5 C802.03,308.5 840.87,497.1 772.9,497.1 Z" fill="#02605b" fill-opacity="0.5"/>
<path d="M772.9,546.7 C840.87,546.7 802.03,533.1 870,533.1 L870,550.7 C802.03,550.7 840.87,551.4 772.9,551.4 Z" fill="#222326" fill-opacity="0.48"/>
<path d="M772.9,573.5 C840.87,573.5 802.03,573.5 870,573.5 L870,575 C802.03,575 840.87,575 772.9,575 Z" fill="#ecb9a4" fill-opacity="0.35"/>
<path d="M772.9,561.9 C840.87,561.9 802.03,561.1 870,561.1 L870,563.6 C802.03,563.6 840.87,564 772.9,564 Z" fill="#4d3245" fill-opacity="0.5"/>
<path d="M772.9,448.8 C840.87,448.8 802.03,319.3 870,319.3 L870,408.3 C802.03,408.3 840.87,469 772.9,469 Z" fill="#862f2f" fill-opacity="0.46"/>
<path d="M772.9,527.6 C840.87,527.6 802.03,419 870,419 L870,466.4 C802.03,466.4 840.87,536.4 772.9,536.4 Z" fill="#7fcbee" fill-opacity="0.48"/>
<path d="M772.9,507.6 C840.87,507.6 802.03,477.1 870,477.1 L870,522.6 C802.03,522.6 840.87,517.1 772.9,517.1 Z" fill="#f3c53d" fill-opacity="0.5"/>
<rect x="111.4" y="199.5" width="54.9" height="83.80000000000001" fill="#862f2f"/>
<rect x="111.4" y="293.8" width="54.9" height="83.80000000000001" fill="#02605b"/>
<rect x="111.4" y="388.1" width="54.9" height="60.0" fill="#7fd5ea"/>
<rect x="111.4" y="458.1" width="54.9" height="53.299999999999955" fill="#f3c53d"/>
<rect x="111.4" y="521.8" width="54.9" height="25.800000000000068" fill="#222326"/>
<rect x="111.4" y="557.8" width="54.9" height="5.100000000000023" fill="#4d3245"/>
<rect x="111.4" y="572.6" width="54.9" height="2.1000000000000227" fill="#ecb9a4"/>
<rect x="263" y="401.2" width="54.9" height="36.30000000000001" fill="#02605b"/>
<rect x="263" y="448" width="54.9" height="23" fill="#862f2f"/>
<rect x="263" y="481.5" width="54.9" height="20.5" fill="#f3c53d"/>
<rect x="263" y="512" width="54.9" height="19.5" fill="#7fd5ea"/>
<rect x="263" y="542" width="54.9" height="10" fill="#222326"/>
<rect x="263" y="562.5" width="54.9" height="1.5" fill="#4d3245"/>
<rect x="263" y="573.5" width="54.9" height="1.5" fill="#ecb9a4"/>
<rect x="415" y="418.1" width="54.9" height="28.599999999999966" fill="#02605b"/>
<rect x="415" y="457.1" width="54.9" height="21.0" fill="#862f2f"/>
<rect x="415" y="488.6" width="54.9" height="18.099999999999966" fill="#7fd5ea"/>
<rect x="415" y="517.1" width="54.9" height="16.699999999999932" fill="#f3c53d"/>
<rect x="415" y="544.3" width="54.9" height="8.600000000000023" fill="#222326"/>
<rect x="415" y="562.9" width="54.9" height="1.6000000000000227" fill="#4d3245"/>
<rect x="415" y="573.8" width="54.9" height="1.2000000000000455" fill="#ecb9a4"/>
<rect x="566.3" y="426.7" width="54.9" height="29.30000000000001" fill="#02605b"/>
<rect x="566.3" y="466.7" width="54.9" height="19.0" fill="#862f2f"/>
<rect x="566.3" y="495.7" width="54.9" height="16.19999999999999" fill="#f3c53d"/>
<rect x="566.3" y="521.9" width="54.9" height="14.300000000000068" fill="#7fd5ea"/>
<rect x="566.3" y="547" width="54.9" height="5.899999999999977" fill="#222326"/>
<rect x="566.3" y="562.9" width="54.9" height="1.7000000000000455" fill="#4d3245"/>
<rect x="566.3" y="573.5" width="54.9" height="1.5" fill="#ecb9a4"/>
<rect x="718" y="448.8" width="54.9" height="20.19999999999999" fill="#862f2f"/>
<rect x="718" y="479.8" width="54.9" height="17.30000000000001" fill="#02605b"/>
<rect x="718" y="507.6" width="54.9" height="9.5" fill="#f3c53d"/>
<rect x="718" y="527.6" width="54.9" height="8.799999999999955" fill="#7fd5ea"/>
<rect x="718" y="546.7" width="54.9" height="4.699999999999932" fill="#222326"/>
<rect x="718" y="561.9" width="54.9" height="2.1000000000000227" fill="#4d3245"/>
<rect x="718" y="573.5" width="54.9" height="1.5" fill="#ecb9a4"/>
<rect x="870" y="210.5" width="54.9" height="98.0" fill="#02605b"/>
<rect x="870" y="319.3" width="54.9" height="89.0" fill="#862f2f"/>
<rect x="870" y="419" width="54.9" height="47.39999999999998" fill="#7fd5ea"/>
<rect x="870" y="477.1" width="54.9" height="45.5" fill="#f3c53d"/>
<rect x="870" y="533.1" width="54.9" height="17.600000000000023" fill="#222326"/>
<rect x="870" y="561.1" width="54.9" height="2.5" fill="#4d3245"/>
<rect x="870" y="573.5" width="54.9" height="1.5" fill="#ecb9a4"/>
<text x="138.85" y="245.6" text-anchor="middle" class="dl">$2,511.84K</text>
<text x="138.85" y="339.90000000000003" text-anchor="middle" class="dl">$2,507.56K</text>
<text x="138.85" y="422.3" text-anchor="middle" class="dl">$1,798.44K</text>
<text x="138.85" y="488.95" text-anchor="middle" class="dl">$1,585.2K</text>
<text x="138.85" y="538.9000000000001" text-anchor="middle" class="dl">$779.02K</text>
<text x="290.45" y="423.55" text-anchor="middle" class="dl">$1,105.26K</text>
<text x="290.45" y="463.7" text-anchor="middle" class="dl">$687.61K</text>
<text x="290.45" y="495.95" text-anchor="middle" class="dl">$612.48K</text>
<text x="290.45" y="525.95" text-anchor="middle" class="dl">$604.8K</text>
<text x="290.45" y="551.2" text-anchor="middle" class="dl">$321.91K</text>
<text x="442.45" y="436.59999999999997" text-anchor="middle" class="dl">$864.09K</text>
<text x="442.45" y="471.8" text-anchor="middle" class="dl">$645.18K</text>
<text x="442.45" y="501.84999999999997" text-anchor="middle" class="dl">$553.61K</text>
<text x="442.45" y="529.6500000000001" text-anchor="middle" class="dl">$516.51K</text>
<text x="442.45" y="552.8" text-anchor="middle" class="dl">$266.54K</text>
<text x="593.75" y="445.55" text-anchor="middle" class="dl">$894.51K</text>
<text x="593.75" y="480.4" text-anchor="middle" class="dl">$582.45K</text>
<text x="593.75" y="507.99999999999994" text-anchor="middle" class="dl">$478.62K</text>
<text x="593.75" y="533.25" text-anchor="middle" class="dl">$451.37K</text>
<text x="745.45" y="463.09999999999997" text-anchor="middle" class="dl">$617.89K</text>
<text x="745.45" y="492.65000000000003" text-anchor="middle" class="dl">$536.39K</text>
<text x="745.45" y="516.5500000000001" text-anchor="middle" class="dl">$296.22K</text>
<text x="745.45" y="536.2" text-anchor="middle" class="dl">$272.39K</text>
<text x="897.45" y="263.7" text-anchor="middle" class="dl">$2,930.6K</text>
<text x="897.45" y="368.0" text-anchor="middle" class="dl">$2,679.37K</text>
<text x="897.45" y="446.9" text-anchor="middle" class="dl">$1,432.76K</text>
<text x="897.45" y="504.05" text-anchor="middle" class="dl">$1,367.71K</text>
<text x="897.45" y="546.1000000000001" text-anchor="middle" class="dl">$553.45K</text>
</svg>
<!-- nav icons -->
<svg class="a" style="left:0;top:88px" width="40" height="120" viewBox="0 88 40 120">
<rect x="12.5" y="99.5" width="17" height="16.5" fill="none" stroke="#f4f4f4" stroke-width="1.4"/>
<rect x="15" y="105.5" width="2.6" height="9" fill="#f4f4f4"/>
<rect x="19.7" y="109" width="2.6" height="5.5" fill="#f4f4f4"/>
<rect x="24.4" y="103.5" width="2.6" height="11" fill="#f4f4f4"/>
<rect x="12.5" y="137.5" width="17" height="17.5" fill="none" stroke="#8e8e8e" stroke-width="1.2"/>
<rect x="12.5" y="137.5" width="17" height="3" fill="#8e8e8e"/>
<path d="M18.2,140 V155 M23.8,140 V155 M12.5,145 H29.5 M12.5,150 H29.5" stroke="#8e8e8e" stroke-width="1.1"/>
<rect x="12.5" y="182.5" width="6" height="5" fill="none" stroke="#8e8e8e" stroke-width="1.2"/>
<rect x="22.5" y="177" width="7" height="5.5" fill="none" stroke="#8e8e8e" stroke-width="1.2"/>
<rect x="22.5" y="188.5" width="7" height="5.5" fill="none" stroke="#8e8e8e" stroke-width="1.2"/>
<path d="M18.5,185 H21 V180 H22.5 M21,185 V191 H22.5" fill="none" stroke="#8e8e8e" stroke-width="1"/>
</svg>
<!-- canvas handles -->
<div class="a" style="left:47px;top:89px;width:9px;height:3px;background:#8a8a8a"></div>
<div class="a" style="left:47px;top:89px;width:3px;height:9px;background:#8a8a8a"></div>
<div class="a" style="left:986px;top:89px;width:9px;height:3px;background:#8a8a8a"></div>
<div class="a" style="left:992px;top:89px;width:3px;height:9px;background:#8a8a8a"></div>
<div class="a" style="left:47px;top:360px;width:3px;height:10px;background:#9a9a9a"></div>
<div class="a" style="left:991px;top:360px;width:3px;height:10px;background:#9a9a9a"></div>
<div class="a" style="left:515px;top:89px;width:11px;height:4px;background:#8e8e8e"></div>
<div class="a" style="left:513px;top:97px;width:15px;height:1px;background:#8a8a8a"></div>
<div class="a" style="left:513px;top:100px;width:15px;height:1px;background:#8a8a8a"></div>
<svg class="a" style="left:940px;top:88px" width="50" height="20" viewBox="940 88 50 20">
<rect x="951.5" y="93.5" width="12" height="10" fill="none" stroke="#777" stroke-width="1"/>
<rect x="952.5" y="99" width="5" height="4" fill="#fff" stroke="#888" stroke-width="0.9"/>
<path d="M957.5,99 L962.5,94.5 M960,94.5 H962.5 V97" fill="none" stroke="#888" stroke-width="0.9"/>
<circle cx="974.5" cy="98.7" r="1.15" fill="#777"/><circle cx="980" cy="98.7" r="1.15" fill="#777"/><circle cx="985.5" cy="98.7" r="1.15" fill="#777"/>
</svg>
<!-- title & legend -->
<div class="a" style="left:323px;top:109px;font-size:25px;line-height:32px;color:#2b6a65;white-space:nowrap;letter-spacing:-0.035px">Sales Amount by Country and Color</div>
<div class="a" style="left:252.5px;top:151px;font-size:14.6px;line-height:18px;font-weight:bold;color:#735f57;white-space:nowrap">Product Color</div>
<div class="a dot" style="left:361.5px;top:156.5px;background:#02605b"></div>
<div class="a lg" style="left:371.5px;top:151px">Black</div>
<div class="a dot" style="left:416px;top:156.5px;background:#222326"></div>
<div class="a lg" style="left:426px;top:151px">Blue</div>
<div class="a dot" style="left:466px;top:156.5px;background:#e8955f"></div>
<div class="a lg" style="left:476.5px;top:151px">Multi</div>
<div class="a dot" style="left:521.5px;top:156.5px;background:#4d3245"></div>
<div class="a lg" style="left:532px;top:151px">NA</div>
<div class="a dot" style="left:561.5px;top:156.5px;background:#862f2f"></div>
<div class="a lg" style="left:573px;top:151px">Red</div>
<div class="a dot" style="left:608.5px;top:156.5px;background:#7fd5ea"></div>
<div class="a lg" style="left:619px;top:151px">Silver</div>
<div class="a dot" style="left:665px;top:156.5px;background:#e8a87c"></div>
<div class="a lg" style="left:677px;top:151px">White</div>
<div class="a dot" style="left:726px;top:156.5px;background:#f3c53d"></div>
<div class="a lg" style="left:737px;top:151px">Yellow</div>
<!-- x labels -->
<div class="a xl c" style="left:91.5px;width:100px;top:594px">United States</div>
<div class="a xl c" style="left:240px;width:106px;top:594px">United Kingdom</div>
<div class="a xl c" style="left:394.5px;width:100px;top:594px">Germany</div>
<div class="a xl c" style="left:546.5px;width:100px;top:594px">France</div>
<div class="a xl c" style="left:698px;width:100px;top:594px">Canada</div>
<div class="a xl c" style="left:849.5px;width:100px;top:594px">Australia</div>
<div class="a" style="left:453px;top:609px;font-family:'Liberation Serif',serif;font-size:23px;line-height:28px;color:#2b5e5e;white-space:nowrap">Country Name</div>

</body></html>
